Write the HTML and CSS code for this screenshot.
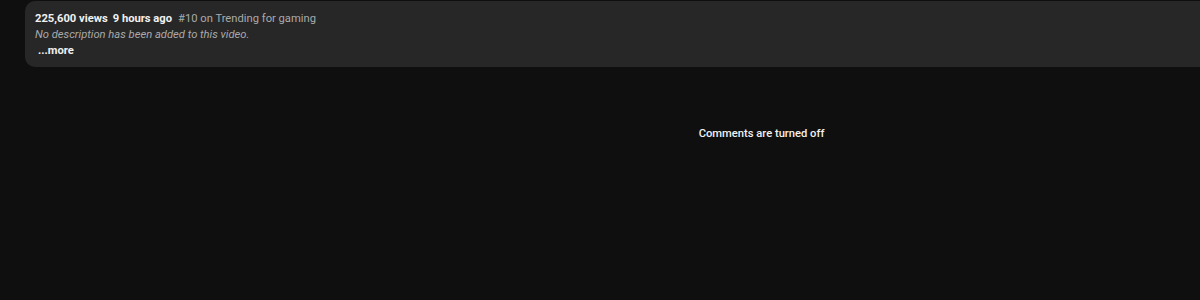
FILE: index.html
```html
<!DOCTYPE html>
<html>
<head>
<meta charset="utf-8">
<link rel="stylesheet" href="styles.css">
</head>
<body>
<div class="page">
  <div class="desc-card">
    <div class="meta">
      <span class="strong">225,600 views</span>
      <span class="strong">9 hours ago</span>
      <span class="trend">#10 on Trending for gaming</span>
    </div>
    <div class="nodesc">No description has been added to this video.</div>
    <div class="more">...more</div>
  </div>
  <div class="comments">
    <span class="comments-off">Comments are turned off</span>
  </div>
</div>
</body>
</html>
```
FILE: styles.css
```css
html, body {
  margin: 0;
  padding: 0;
  background: #0f0f0f;
  height: 100%;
}
body {
  font-family: Roboto, "Liberation Sans", Arial, sans-serif;
  color: #f1f1f1;
  overflow: hidden;
}
.page {
  padding: 1px 0 0 25px;
}
.desc-card {
  background: #272727;
  border-radius: 10px 0 0 10px;
  padding: 10px 10px 8px;
  box-sizing: border-box;
  height: 66px;
  font-size: 11.2px;
  line-height: 16px;
}
.meta {
  display: flex;
  gap: 5px;
  white-space: nowrap;
}
.strong {
  font-weight: 700;
  color: #f1f1f1;
}
.trend {
  color: #aaaaaa;
  margin-left: 1px;
}
.nodesc {
  font-style: italic;
  color: #aaaaaa;
}
.more {
  font-weight: 700;
  padding-left: 3px;
}
.comments {
  display: flex;
  justify-content: center;
  padding-left: 298px;
  margin-top: 59px;
}
.comments-off {
  font-size: 11.2px;
  line-height: 16px;
  font-weight: 500;
  color: #f1f1f1;
}
```
